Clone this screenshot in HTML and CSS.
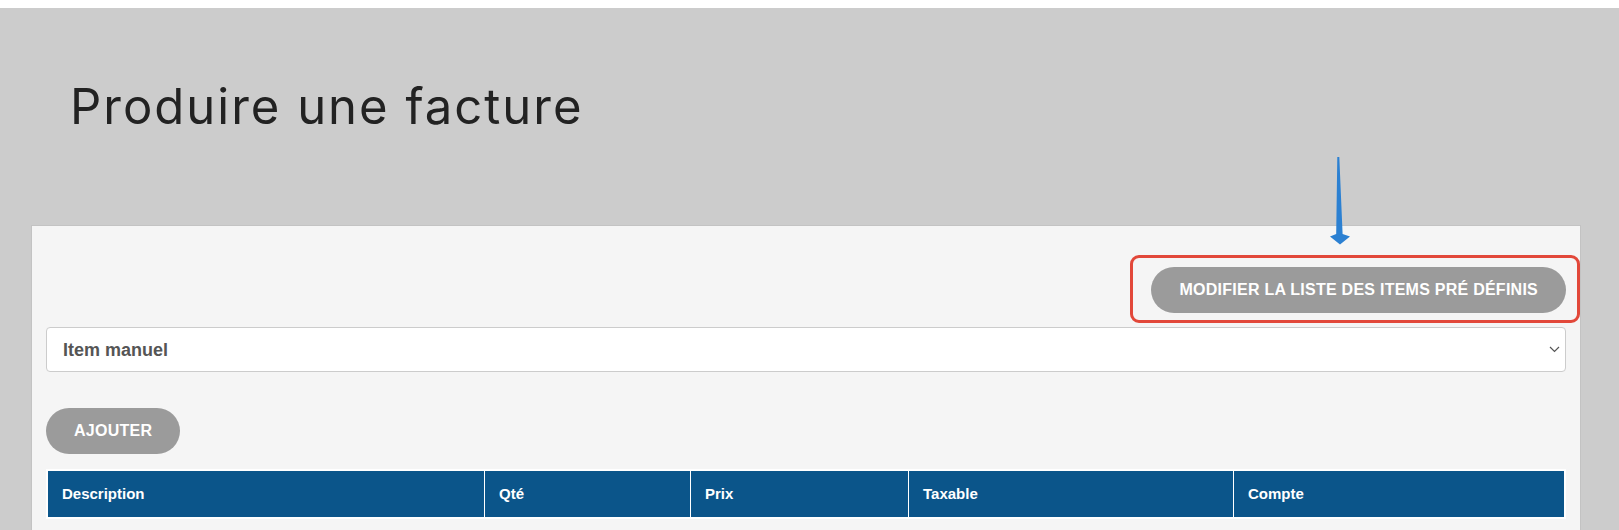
FILE: index.html
```html
<!DOCTYPE html>
<html lang="fr">
<head>
<meta charset="utf-8">
<title>Produire une facture</title>
<link rel="stylesheet" href="styles.css">
</head>
<body>
<div class="page">
  <header class="page-head">
    <h1 class="page-title">Produire une facture</h1>
  </header>
  <section class="panel">
    <div class="toolbar">
      <div class="highlight-wrap">
        <button class="pill-btn" type="button">Modifier la liste des items pré définis</button>
        <span class="highlight-box"></span>
      </div>
    </div>
    <div class="select-wrap">
      <select class="item-select">
        <option>Item manuel</option>
      </select>
      <svg class="select-chevron" width="11" height="7" viewBox="0 0 11 7" aria-hidden="true">
        <path d="M1 1 L5.5 5.5 L10 1" fill="none" stroke="#555" stroke-width="1.2"/>
      </svg>
    </div>
    <div class="add-row">
      <button class="pill-btn" type="button">Ajouter</button>
    </div>
    <table class="items-table">
      <colgroup>
        <col class="col-desc"><col class="col-qty"><col class="col-price"><col class="col-tax"><col class="col-account">
      </colgroup>
      <thead>
        <tr>
          <th>Description</th>
          <th>Qté</th>
          <th>Prix</th>
          <th>Taxable</th>
          <th>Compte</th>
        </tr>
      </thead>
    </table>
  </section>
  <svg class="annot-arrow" width="40" height="100" viewBox="1320 150 40 100" aria-hidden="true">
    <polygon points="1337.3,157 1339.3,157 1342.6,234 1350,236.5 1340,244.5 1330,236.5 1336.2,234" fill="#2b80d2"/>
  </svg>
</div>
</body>
</html>
```

FILE: styles.css
```css
html, body {
  margin: 0;
  padding: 0;
  background: #ffffff;
}

.page {
  position: relative;
  margin-top: 8px;
  background: #cccccc;
  min-height: 600px;
  padding-bottom: 40px;
}

.page-head {
  padding: 69px 0 0 70px;
}

.page-title {
  margin: 0;
  font-family: "Inter", "Liberation Sans", sans-serif;
  font-weight: 400;
  font-size: 49px;
  line-height: 60px;
  letter-spacing: 2px;
  color: #222222;
}

.panel {
  margin: 88px 38px 0 31px;
  background: #f5f5f5;
  border: 1px solid #c3c3c3;
  padding: 41px 14px 60px 14px;
  font-family: "Liberation Sans", Arial, sans-serif;
}

.toolbar {
  display: flex;
  justify-content: flex-end;
}

.highlight-wrap {
  position: relative;
  display: flex;
}

.highlight-box {
  position: absolute;
  left: -21px;
  right: -14px;
  top: -12px;
  bottom: -10px;
  border: 3px solid #e2483a;
  border-radius: 9px;
  pointer-events: none;
}

.pill-btn {
  height: 46px;
  padding: 0 28px;
  border: none;
  border-radius: 23px;
  background: #9b9b9b;
  color: #ffffff;
  font-family: "Liberation Sans", Arial, sans-serif;
  font-weight: 700;
  font-size: 16px;
  letter-spacing: 0.25px;
  text-transform: uppercase;
}

.select-wrap {
  position: relative;
  margin-top: 14px;
}

.item-select {
  display: block;
  width: 100%;
  height: 45px;
  box-sizing: border-box;
  padding: 0 40px 0 16px;
  appearance: none;
  -webkit-appearance: none;
  background: #ffffff;
  border: 1px solid #cccccc;
  border-radius: 4px;
  color: #555555;
  font-family: "Liberation Sans", Arial, sans-serif;
  font-weight: 700;
  font-size: 18px;
}

.select-chevron {
  position: absolute;
  right: 6px;
  top: 19px;
  pointer-events: none;
}

.add-row {
  margin-top: 36px;
  display: flex;
}

.items-table {
  margin-top: 15px;
  width: 100%;
  border-collapse: separate;
  border-spacing: 1px;
  border: 1px solid #ffffff;
  background: #ffffff;
  table-layout: fixed;
}

.col-desc { width: 436px; }
.col-qty { width: 205px; }
.col-price { width: 217px; }
.col-tax { width: 324px; }

.items-table th {
  background: #0b558a;
  color: #ffffff;
  text-align: left;
  font-weight: 700;
  font-size: 15px;
  line-height: 18px;
  padding: 14px 14px;
}

.annot-arrow {
  position: absolute;
  left: 1320px;
  top: 142px;
  pointer-events: none;
}
```
